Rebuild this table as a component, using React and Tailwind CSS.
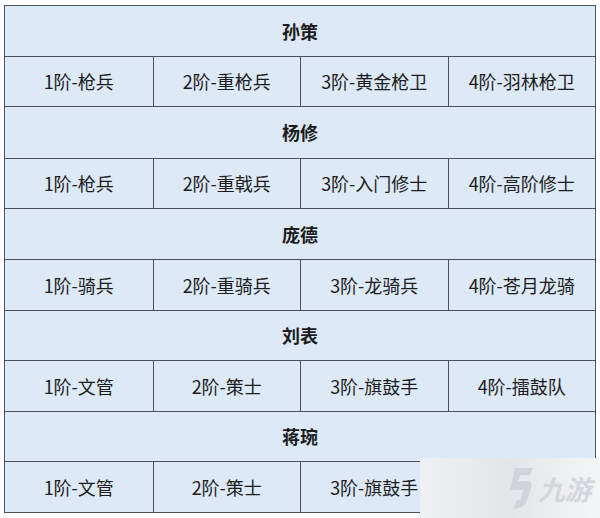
import React from 'react'

const groups = [
  { name: '孙策', units: ['1阶-枪兵', '2阶-重枪兵', '3阶-黄金枪卫', '4阶-羽林枪卫'] },
  { name: '杨修', units: ['1阶-枪兵', '2阶-重戟兵', '3阶-入门修士', '4阶-高阶修士'] },
  { name: '庞德', units: ['1阶-骑兵', '2阶-重骑兵', '3阶-龙骑兵', '4阶-苍月龙骑'] },
  { name: '刘表', units: ['1阶-文管', '2阶-策士', '3阶-旗鼓手', '4阶-擂鼓队'] },
  { name: '蒋琬', units: ['1阶-文管', '2阶-策士', '3阶-旗鼓手', '4阶-擂鼓队'] },
]

const rowH = ['h-[50px]', 'h-[50px]', 'h-[52px]', 'h-[50px]', 'h-[51px]', 'h-[51px]', 'h-[50px]', 'h-[51px]', 'h-[50px]', 'h-[51px]']

export default function App() {
  return (
    <div className="relative w-[600px] h-[518px] bg-white overflow-hidden" style={{ fontFamily: '"Noto Sans CJK SC", "Noto Sans", sans-serif' }}>
      <div className="absolute left-[4px] top-[5px] w-[592px] border border-[#4b525b] bg-[#dde9f6] text-[#1c1c1c]">
        {groups.map((g, gi) => (
          <React.Fragment key={gi}>
            <div className={`${rowH[gi * 2]} flex items-center justify-center font-bold text-[18px] ${gi > 0 ? 'border-t border-[#4b525b]' : ''}`}>
              {g.name}
            </div>
            <div className={`${rowH[gi * 2 + 1]} grid grid-cols-4 border-t border-[#4b525b]`}>
              {g.units.map((u, ui) => (
                <div key={ui} className={`flex items-center justify-center text-[18px] ${ui > 0 ? 'border-l border-[#4b525b]' : ''}`}>
                  {u}
                </div>
              ))}
            </div>
          </React.Fragment>
        ))}
      </div>
      {/* watermark */}
      <div className="absolute left-[420px] top-[458px] w-[180px] h-[60px] bg-gradient-to-r from-[#eef1f4] via-[#e3e6e9] to-[#f4f5f6] flex items-center pl-[88px] gap-[4px] text-[#d3d6da] whitespace-nowrap">
        <svg width="26" height="44" viewBox="0 0 26 44">
          <path d="M7 2 H25 L22 9 H12 L10 15 H19 Q25 15 23 22 L19 34 Q17 40 11 42 L5 43 L9 34 H13 L15 24 H2 Z" fill="#d0d4d9" />
        </svg>
        <span className="italic font-bold text-[27px] tracking-tight leading-none">九游</span>
      </div>
    </div>
  )
}
